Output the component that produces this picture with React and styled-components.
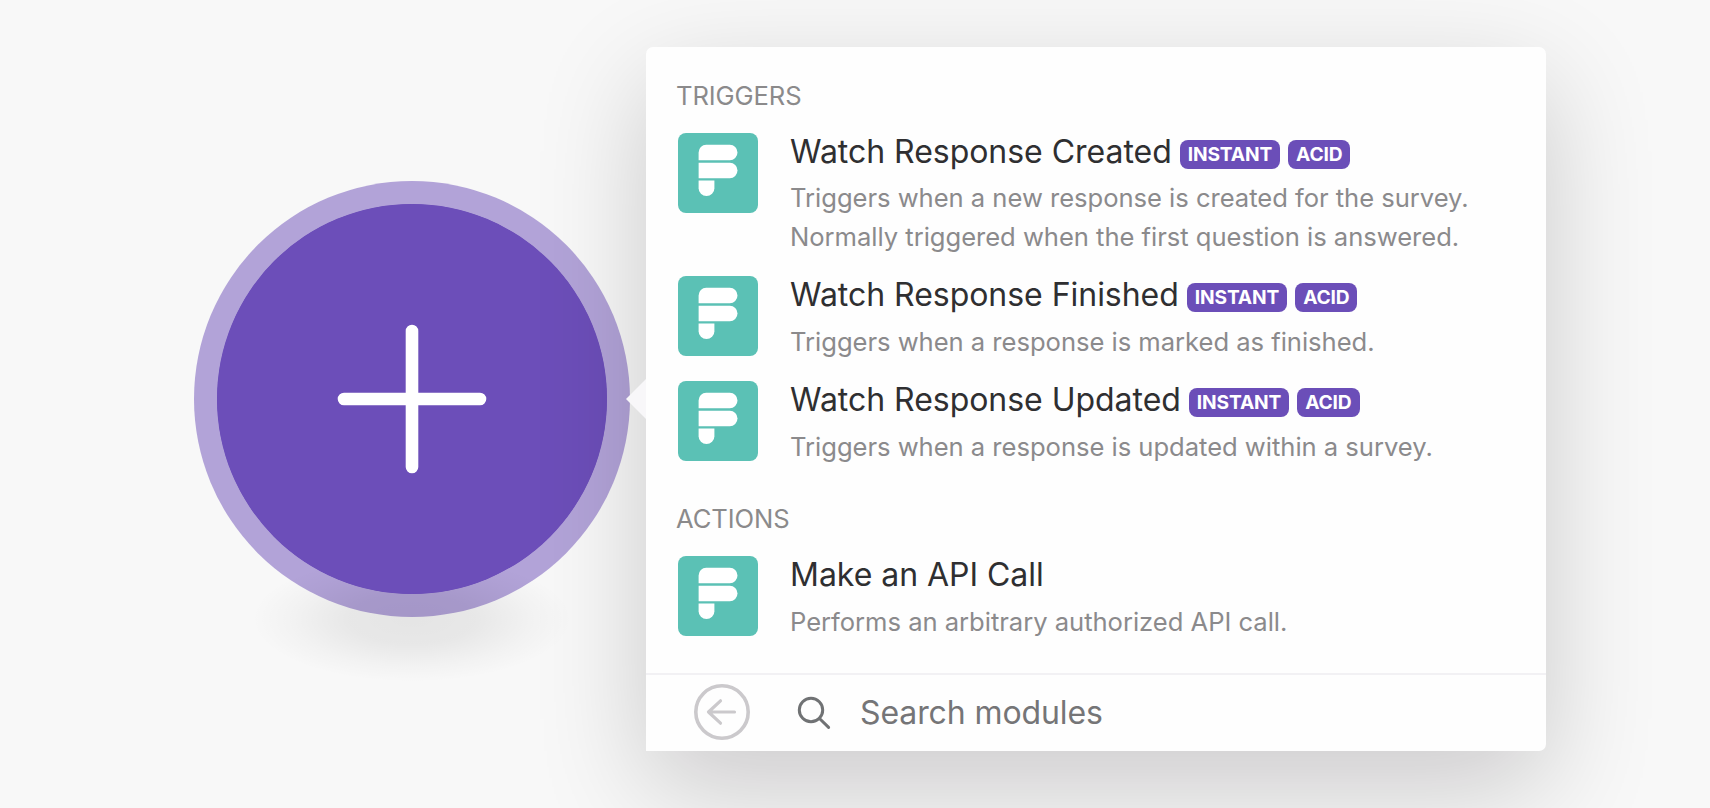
import React from "react";
import styled, { createGlobalStyle } from "styled-components";

const GlobalStyle = createGlobalStyle`
  * { box-sizing: border-box; }
  body { margin: 0; background: #f8f8f8; font-family: Inter, "Liberation Sans", sans-serif; }
`;

const Canvas = styled.main`
  display: flex;
  align-items: center;
  gap: 16px;
  height: 808px;
  padding: 47px 0 57px 194px;
  overflow: hidden;
  background: #f8f8f8;
`;

const ModuleNode = styled.div`
  position: relative;
  isolation: isolate;
  flex: none;
  display: flex;
  align-items: center;
  justify-content: center;
  width: 436px;
  height: 436px;
  margin-bottom: 1px;
  border: 23px solid rgba(107, 78, 184, 0.5);
  border-radius: 50%;
  background: #6c4eb9 padding-box;

  &::after {
    content: "";
    position: absolute;
    z-index: -1;
    left: 35px;
    top: 352px;
    width: 320px;
    height: 126px;
    background: radial-gradient(closest-side, rgba(0, 0, 0, 0.08), rgba(0, 0, 0, 0.065) 40%, rgba(0, 0, 0, 0.022) 75%, transparent);
  }
`;

const NodeFace = styled.div`
  display: flex;
  align-items: center;
  justify-content: center;
  flex: none;
  width: 390px;
  height: 390px;
  border-radius: 50%;
  background: #6c4eb9;
`;

const Panel = styled.section`
  position: relative;
  flex: none;
  display: flex;
  flex-direction: column;
  width: 900px;
  height: 704px;
  border-radius: 7px 7px 7px 0;
  background: #fefefe;
  box-shadow: 0 36px 110px rgba(10, 0, 10, 0.19);
`;

const Pointer = styled.span`
  position: absolute;
  left: -20px;
  top: 332px;
  width: 20px;
  height: 40px;
  background: #f8f7f9;
  clip-path: polygon(100% 0, 0 50%, 100% 100%);
`;

const ModuleList = styled.div`
  flex: 1;
  padding: 30px 32px 0 30px;
`;

const GroupLabel = styled.h2`
  margin: 0;
  padding-top: ${(p) => (p.$spaced ? "14px" : "0")};
  height: ${(p) => (p.$spaced ? "70px" : "56px")};
  font-size: 25.6px;
  font-weight: 400;
  line-height: 38px;
  letter-spacing: -0.1px;
  color: #8b8a8b;
`;

const ModuleRow = styled.article`
  display: flex;
  gap: 32px;
  padding: 0 0 25px 2px;
`;

const AppTile = styled.div`
  flex: none;
  width: 80px;
  height: 80px;
  border-radius: 8px;
  background: #5bc1b5;
  overflow: hidden;
`;

const ModuleText = styled.div`
  flex: 1;
  height: ${(p) => (p.$lines === 2 ? "118.2px" : "80px")};
  white-space: nowrap;
`;

const Title = styled.h3`
  display: flex;
  margin: 0;
  height: 46px;
  font-size: 32px;
  font-weight: 400;
  line-height: 38px;
  letter-spacing: -0.03px;
  color: #2f2f31;
`;

const Tag = styled.span`
  margin: 7px 0 0 8px;
  height: 29px;
  padding: 0 8px;
  border-radius: 8px;
  background: #6b4eb8;
  color: #fff;
  font-size: 19.2px;
  font-weight: 700;
  line-height: 29px;
  letter-spacing: -0.16px;
`;

const Description = styled.p`
  margin: 0;
  font-size: 25.6px;
  font-weight: 400;
  line-height: ${(p) => (p.$single ? "40px" : "38.6px")};
  letter-spacing: -0.03px;
  color: #8b8a8c;
`;

const SearchBar = styled.footer`
  display: flex;
  align-items: center;
  height: 78px;
  padding: 0 0 2px 47px;
  border-top: 2px solid #f2f1f4;
`;

const SearchIcon = styled.svg`
  margin-left: 46px;
`;

const Placeholder = styled.span`
  margin-left: 27px;
  padding-top: 2px;
  font-size: 32px;
  line-height: 40px;
  letter-spacing: -0.1px;
  color: #757577;
`;

const GROUPS = [
  {
    label: "TRIGGERS",
    modules: [
      {
        title: "Watch Response Created",
        tags: ["INSTANT", "ACID"],
        text: [
          "Triggers when a new response is created for the survey.",
          "Normally triggered when the first question is answered.",
        ],
      },
      {
        title: "Watch Response Finished",
        tags: ["INSTANT", "ACID"],
        text: ["Triggers when a response is marked as finished."],
      },
      {
        title: "Watch Response Updated",
        tags: ["INSTANT", "ACID"],
        text: ["Triggers when a response is updated within a survey."],
      },
    ],
  },
  {
    label: "ACTIONS",
    modules: [
      {
        title: "Make an API Call",
        tags: [],
        text: ["Performs an arbitrary authorized API call."],
      },
    ],
  },
];

function AppLogo() {
  return (
    <AppTile>
      <svg width="80" height="80" viewBox="0 0 80 80" fill="#fff">
        <path d="M28.2 11.8H51.8a7.7 7.7 0 0 1 0 15.4H20.6V19.4a7.6 7.6 0 0 1 7.6-7.6Z" />
        <path d="M20.6 29.8H51.8a7.7 7.7 0 0 1 0 15.4H20.6Z" />
        <path d="M20.6 47.4H36.4V55.2a7.9 7.9 0 0 1-15.8 0Z" />
      </svg>
    </AppTile>
  );
}

function Module({ title, tags, text }) {
  return (
    <ModuleRow>
      <AppLogo />
      <ModuleText $lines={text.length}>
        <Title>
          {title}
          {tags.map((tag) => (
            <Tag key={tag}>{tag}</Tag>
          ))}
        </Title>
        {text.map((line) => (
          <Description key={line} $single={text.length === 1}>
            {line}
          </Description>
        ))}
      </ModuleText>
    </ModuleRow>
  );
}

export default function App() {
  return (
    <>
      <GlobalStyle />
      <Canvas>
        <ModuleNode>
          <NodeFace>
            <svg width="150" height="150" viewBox="0 0 150 150" stroke="#fff" strokeWidth="12.6" strokeLinecap="round">
              <path d="M75 7V143M7 75H143" />
            </svg>
          </NodeFace>
        </ModuleNode>
        <Panel>
          <Pointer />
          <ModuleList>
            {GROUPS.map((group, i) => (
              <React.Fragment key={group.label}>
                <GroupLabel $spaced={i > 0}>{group.label}</GroupLabel>
                {group.modules.map((m) => (
                  <Module key={m.title} {...m} />
                ))}
              </React.Fragment>
            ))}
          </ModuleList>
          <SearchBar>
            <svg width="58" height="58" viewBox="0 0 58 58" fill="none" stroke="#cbc9cc" strokeWidth="3.6" strokeLinecap="round" strokeLinejoin="round">
              <circle cx="29" cy="29" r="26.2" />
              <path d="M41.5 29H15.5M27.5 17.8L15.5 29L27.5 40.2" strokeWidth="3.2" />
            </svg>
            <SearchIcon width="36" height="36" viewBox="0 0 36 36" fill="none" stroke="#707274" strokeWidth="3" strokeLinecap="round">
              <circle cx="14" cy="16" r="11.7" />
              <path d="M22.5 24.5L31.6 33.4" />
            </SearchIcon>
            <Placeholder>Search modules</Placeholder>
          </SearchBar>
        </Panel>
      </Canvas>
    </>
  );
}
